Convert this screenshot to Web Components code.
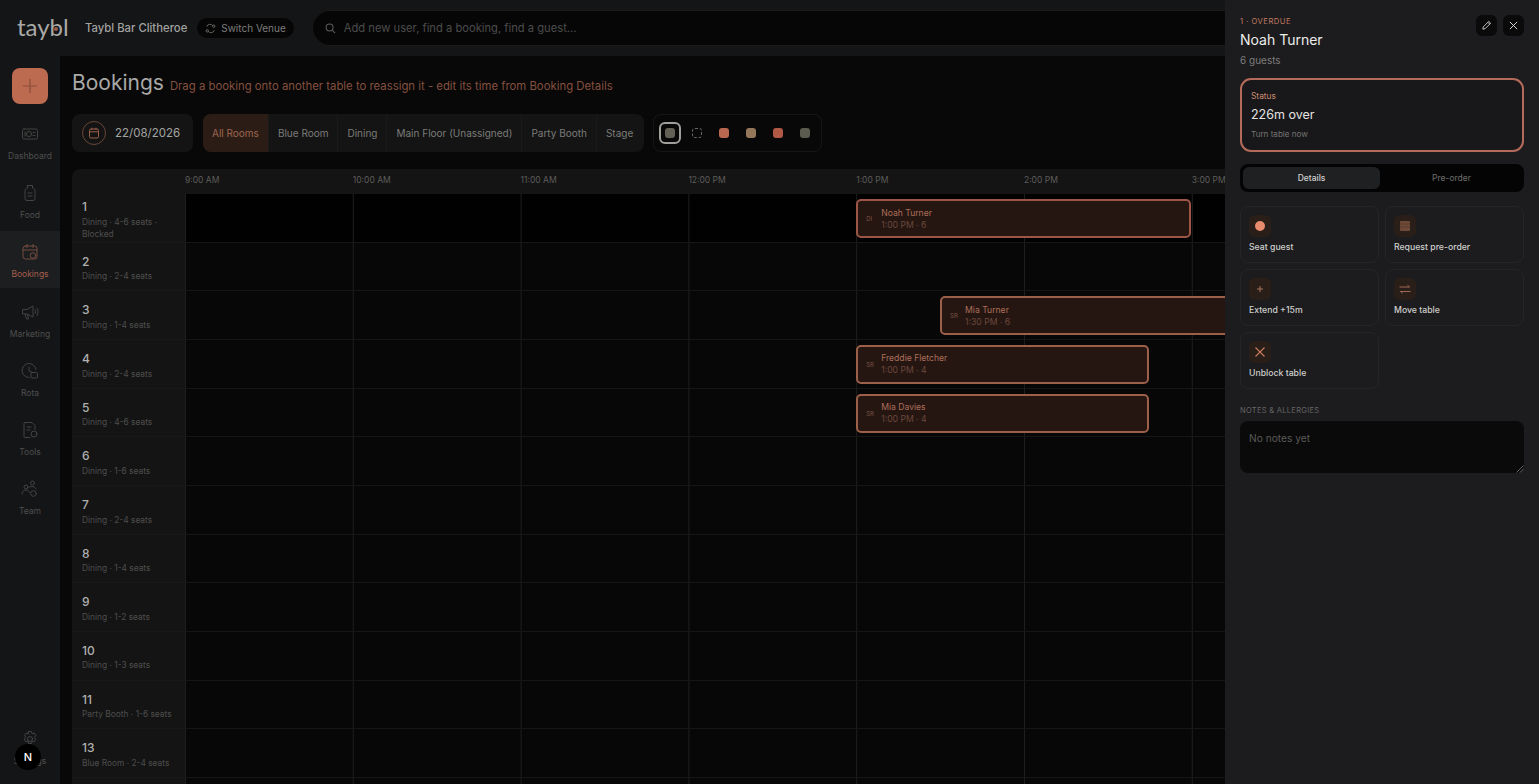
<!DOCTYPE html>
<html lang="en">
<head>
<meta charset="utf-8">
<title>Taybl Bookings</title>
<style>
html, body { margin: 0; height: 100%; background: #080808; overflow: hidden; }
body { font-family: Inter, "Noto Sans", sans-serif; color: #aaa; }
</style>
</head>
<body>
<taybl-app></taybl-app>

<script>
const ICONS = {
  dashboard: '<rect x="2.500" y="5" width="15" height="10" rx="1.500"/><circle cx="9" cy="10" r="2.600"/><path d="M13 8.500h2M13 11.500h2M5 8v4"/>',
  food: '<path d="M7.500 2.500h5v2.500c2 .6 2.500 1.600 2.500 3v7.500a2 2 0 0 1-2 2H7a2 2 0 0 1-2-2V8c0-1.400.5-2.400 2.500-3z"/><path d="M8 10h4M8 13h4"/>',
  bookings: '<rect x="3" y="4" width="14" height="13" rx="2.500"/><path d="M3 8h14M7 2.500v3M13 2.500v3"/><circle cx="13" cy="13.500" r="2.800"/>',
  marketing: '<path d="M3 7.500h4l6-3.500v11L7 12H3z"/><path d="M5 12l1.500 5h2L7.500 12.500M15 7.500c1 1.200 1 3 0 4.200M17 6c1.500 2 1.500 5.500 0 7.500"/>',
  rota: '<path d="M9 16.500a7 7 0 1 1 7-8"/><path d="M9 6v4l2.500 1"/><rect x="11" y="11.500" width="6.500" height="5.500" rx="1"/>',
  tools: '<path d="M5 2.500h7l3 3v4M5 2.500a1 1 0 0 0-1 1v13a1 1 0 0 0 1 1h5"/><path d="M7 7h4M7 10h3"/><circle cx="14" cy="14" r="3"/>',
  team: '<circle cx="6" cy="8" r="2"/><circle cx="12.500" cy="4" r="2"/><path d="M2 15c.5-3 2-4 4-4s3 .8 3.500 2.500M9.500 8c2-1 5-.8 6.500 2"/><circle cx="13.500" cy="14.500" r="2.800"/>',
  settings: '<circle cx="10" cy="10" r="2.500"/><path d="M8.500 2.500h3l.6 2.300 2.200-.7 1.500 2.600-1.600 1.700 1.600 1.700-1.500 2.600-2.200-.7-.6 2.500h-3l-.6-2.500-2.200.7-1.500-2.600 1.600-1.700L4.600 6.700l1.500-2.600 2.200.7z"/>'
};

function svgIcon(name, size) {
  return `<svg width="${size}" height="${size}" viewBox="0 0 20 20" fill="none" stroke="currentColor" stroke-width="1" stroke-linecap="round" stroke-linejoin="round">${ICONS[name]}</svg>`;
}

class TayblTopbar extends HTMLElement {
  constructor() {
    super();
    this.attachShadow({ mode: "open" });
    this.shadowRoot.innerHTML = `
<style>
:host { display: flex; align-items: center; height: 56px; background: #141516; flex: none; }
.logo { position: relative; width: 67px; padding-left: 17px; box-sizing: border-box; font: 400 24px/1 Lato, sans-serif; color: #a9a9a6; margin-top: -3px; }
.dot { position: absolute; left: 54px; top: 12px; width: 4px; height: 4px; border-radius: 50%; background: #9a5f4c; }
.venue { margin-left: 18px; font-size: 11.300px; font-weight: 500; color: #a2a2a0; }
.switch { display: flex; align-items: center; gap: 4px; height: 20px; margin-left: 10px; padding: 0 8px 0 7px; border-radius: 10px; background: #060606; font-size: 10px; color: #7d7d7b; }
.search { display: flex; align-items: center; gap: 8px; flex: 1; height: 36px; margin-left: 18px; padding-left: 13px; border-radius: 18px; background: #060606; box-shadow: inset 0 0 0 1px #1a1a1a; font-size: 11.200px; color: #4c4c4c; }
</style>
<div class="logo">taybl<span class="dot"></span></div>
<div class="venue">Taybl Bar Clitheroe</div>
<div class="switch">
  <svg width="13" height="13" viewBox="0 0 14 14" fill="none" stroke="#6b6b68" stroke-width="1"><path d="M3 5a3.500 3 0 0 1 6.500-1M11 9a3.500 3 0 0 1-6.500 1"/><circle cx="3.500" cy="9.500" r="1.300"/><circle cx="10.500" cy="4.500" r="1.300"/></svg>
  Switch Venue
</div>
<div class="search">
  <svg width="11" height="11" viewBox="0 0 12 12" fill="none" stroke="#5d5d5d" stroke-width="1.100"><circle cx="5" cy="5" r="3.800"/><path d="M8 8l3 3"/></svg>
  Add new user, find a booking, find a guest...
</div>`;
  }
}
customElements.define("taybl-topbar", TayblTopbar);

class TayblNavItem extends HTMLElement {
  constructor() {
    super();
    this.attachShadow({ mode: "open" });
  }

  connectedCallback() {
    const active = this.hasAttribute("active");
    this.shadowRoot.innerHTML = `
<style>
:host { display: flex; flex-direction: column; align-items: center; height: 59.200px; padding-top: 4px; box-sizing: border-box; font-size: 8.500px; color: ${active ? "#a35f4d" : "#4f4f4f"}; background: ${active ? "linear-gradient(#1d1e20, #1d1e20) top / 100% 57px no-repeat" : "transparent"}; }
svg { display: block; margin-top: 7px; margin-bottom: 7px; color: ${active ? "#764c40" : "#434343"}; }
</style>
${svgIcon(this.getAttribute("icon"), 20)}
<slot></slot>`;
  }
}
customElements.define("taybl-nav-item", TayblNavItem);

class TayblSidebar extends HTMLElement {
  constructor() {
    super();
    this.attachShadow({ mode: "open" });
    this.shadowRoot.innerHTML = `
<style>
:host { display: flex; flex-direction: column; width: 60px; flex: none; background: #141516; position: relative; }
.add { width: 36px; height: 36px; margin: 12px auto 9px; border-radius: 8px; background: #bc6a50; display: flex; align-items: center; justify-content: center; }
.bottom { margin-top: auto; padding-bottom: 7px; }
.dev { position: absolute; left: 15px; bottom: 14px; width: 26px; height: 26px; border-radius: 50%; background: #000; color: #fff; display: flex; align-items: center; justify-content: center; font-size: 11px; font-weight: 500; }
</style>
<div class="add"><svg width="14" height="14" viewBox="0 0 14 14" stroke="#8a4c39" stroke-width="1.200"><path d="M7 0v14M0 7h14"/></svg></div>
<slot></slot>
<div class="bottom"><taybl-nav-item icon="settings">Settings</taybl-nav-item></div>
<div class="dev">N</div>`;
  }
}
customElements.define("taybl-sidebar", TayblSidebar);

class TayblToolbar extends HTMLElement {
  constructor() {
    super();
    this.attachShadow({ mode: "open" });
    const rooms = ["All Rooms", "Blue Room", "Dining", "Main Floor (Unassigned)", "Party Booth", "Stage"];
    const tabs = rooms.map((r, i) => `<div class="tab${i === 0 ? " on" : ""}">${r}</div>`).join("");
    this.shadowRoot.innerHTML = `
<style>
:host { display: flex; align-items: stretch; height: 38px; gap: 10px; }
.date { display: flex; align-items: center; gap: 9px; width: 121px; padding-left: 10px; box-sizing: border-box; border-radius: 8px; background: #141414; font-size: 11.500px; color: #a5a5a3; }
.ring { width: 24px; height: 24px; border-radius: 50%; border: 1px solid #6a4639; box-sizing: border-box; display: flex; align-items: center; justify-content: center; }
.rooms { display: flex; border-radius: 8px; background: #141414; overflow: hidden; }
.tab { display: flex; align-items: center; padding: 0 9px; font-size: 10px; color: #7b7b79; border-left: 1px solid #1a1a1a; }
.tab:last-child { padding-right: 11px; }
.tab.on { background: #2b1d16; color: #9f6550; border-left: 0; }
.swatches { display: flex; align-items: center; gap: 17px; margin-left: -1px; width: 169px; padding-left: 12px; box-sizing: border-box; border-radius: 8px; box-shadow: inset 0 0 0 1px #161616; }
.sw { width: 10px; height: 10px; border-radius: 3px; flex: none; position: relative; }
.sw.sel::after { content: ""; position: absolute; inset: -6px; border: 2px solid #a09f9b; border-radius: 6px; }
.dash { border: 1px dashed #666; box-sizing: border-box; background: none; }
</style>
<div class="date">
  <div class="ring"><svg width="12" height="12" viewBox="0 0 12 12" fill="none" stroke="#9a5f49" stroke-width="1"><rect x="1.500" y="2" width="9" height="9" rx="1.500"/><path d="M1.500 4.800h9M4 .8v2M8 .8v2"/></svg></div>
  22/08/2026
</div>
<div class="rooms">${tabs}</div>
<div class="swatches">
  <div class="sw sel" style="background:#636155"></div>
  <div class="sw dash"></div>
  <div class="sw" style="background:#b9674f"></div>
  <div class="sw" style="background:#95775a"></div>
  <div class="sw" style="background:#b05a46"></div>
  <div class="sw" style="background:#5c5b4f"></div>
</div>`;
  }
}
customElements.define("taybl-toolbar", TayblToolbar);

class TayblBooking extends HTMLElement {
  constructor() {
    super();
    this.attachShadow({ mode: "open" });
  }

  connectedCallback() {
    const hour = 167.800;
    const start = parseFloat(this.getAttribute("start"));
    const len = parseFloat(this.getAttribute("length"));
    // offsets come from the booking time, the lane is a free canvas
    this.style.left = start * hour + "px";
    this.style.width = len * hour - 1 + "px";
    this.shadowRoot.innerHTML = `
<style>
:host { position: absolute; top: 5px; height: 39px; box-sizing: border-box; display: flex; align-items: center; border: 2px solid ${this.getAttribute("edge") || "#9c5f49"}; border-radius: 5px; background: #261612; }
.tag { width: 23px; padding-left: 8px; box-sizing: border-box; font-size: 6px; color: #7a5344; flex: none; }
.txt { font-size: 8.600px; line-height: 12px; color: #ac6f5a; }
.sub { color: #6b483c; }
</style>
<div class="tag">${this.getAttribute("tag")}</div>
<div class="txt"><slot></slot><div class="sub">${this.getAttribute("time")}</div></div>`;
  }
}
customElements.define("taybl-booking", TayblBooking);

class TayblRow extends HTMLElement {
  constructor() {
    super();
    this.attachShadow({ mode: "open" });
  }

  connectedCallback() {
    const blocked = this.hasAttribute("blocked");
    const num = this.getAttribute("num") || "";
    const info = this.getAttribute("info") || "";
    this.shadowRoot.innerHTML = `
<style>
:host { display: flex; height: 48.670px; flex: none; }
.label { width: 113px; flex: none; box-sizing: border-box; padding: 3px 8px 0 10px; display: flex; flex-direction: column; justify-content: center; background: #141414; border-bottom: 1px solid #181818; }
.num { font-size: 12px; font-weight: 500; line-height: 15px; color: #b0b0ae; }
.info { font-size: 8.400px; line-height: 12px; color: #4e4e4e; margin-top: 1.500px; }
.lane { position: relative; flex: 1; border-bottom: 1px solid #161616; background-color: ${blocked ? "#010101" : "#070707"};
  background-image: linear-gradient(90deg, #1e1e1e 1px, transparent 1px); background-size: 167.800px 100%; }
</style>
<div class="label"><div class="num">${num}</div>${info ? `<div class="info">${info}</div>` : ""}</div>
<div class="lane"><slot></slot></div>`;
  }
}
customElements.define("taybl-row", TayblRow);

class TayblTimeline extends HTMLElement {
  constructor() {
    super();
    this.attachShadow({ mode: "open" });
    const hours = ["9:00 AM", "10:00 AM", "11:00 AM", "12:00 PM", "1:00 PM", "2:00 PM", "3:00 PM", "4:00 PM"];
    this.shadowRoot.innerHTML = `
<style>
:host { display: flex; flex-direction: column; width: 1456px; border-radius: 8px 8px 0 0; overflow: hidden; }
.head { display: flex; height: 25px; flex: none; background: #141414; padding-left: 113px; }
.hour { width: 167.800px; flex: none; font-size: 8.500px; line-height: 22px; color: #5d5d5b; }
</style>
<div class="head">${hours.map(h => `<div class="hour">${h}</div>`).join("")}</div>
<slot></slot>`;
  }
}
customElements.define("taybl-timeline", TayblTimeline);

class TayblAction extends HTMLElement {
  constructor() {
    super();
    this.attachShadow({ mode: "open" });
  }

  connectedCallback() {
    const glyphs = {
      seat: '<circle cx="11" cy="11" r="5" fill="#e88a6c"/>',
      preorder: '<rect x="6" y="6" width="10" height="10" rx="1" fill="#6f4a39"/><path d="M6 9h10M6 12h10" stroke="#553829" stroke-width=".7"/>',
      extend: '<path d="M11 8v6M8 11h6" stroke="#a8745c" stroke-width="1"/>',
      move: '<path d="M5.500 9h10l-2-1.800M16.500 13.500h-10l2 1.800" fill="none" stroke="#a06a52" stroke-width="1"/>',
      unblock: '<path d="M6.500 6.500l9 9M15.500 6.500l-9 9" stroke="#c97a5e" stroke-width="1.100"/>'
    };
    this.shadowRoot.innerHTML = `
<style>
:host { display: block; height: 57px; box-sizing: border-box; padding: 8px 8px 0; border: 1px solid #242527; border-radius: 8px; font-size: 8.700px; line-height: 11px; font-weight: 500; color: #cfcfcd; }
.ico { width: 22px; height: 22px; border-radius: 6px; background: #2a1f18; margin-bottom: 4.500px; }
svg { display: block; }
</style>
<div class="ico"><svg width="22" height="22" viewBox="0 0 22 22">${glyphs[this.getAttribute("icon")]}</svg></div>
<slot></slot>`;
  }
}
customElements.define("taybl-action", TayblAction);

class TayblDrawer extends HTMLElement {
  constructor() {
    super();
    this.attachShadow({ mode: "open" });
    this.shadowRoot.innerHTML = `
<style>
:host { position: absolute; top: 0; right: 0; bottom: 0; width: 314px; box-sizing: border-box; padding: 15px; background: #1c1c1e; z-index: 5; display: flex; flex-direction: column; }
.head { position: relative; height: 63px; }
.over { font-size: 7.600px; line-height: 12px; letter-spacing: .5px; color: #c07a62; padding-top: 1px; }
.name { font-size: 14px; line-height: 20px; color: #ececea; margin-top: 2px; }
.guests { font-size: 10px; line-height: 14px; color: #7d7d7d; margin-top: 3px; }
.btns { position: absolute; top: 0; right: 0; display: flex; gap: 6px; }
.btn { width: 21px; height: 21px; border-radius: 6px; background: #0a0a0a; display: flex; align-items: center; justify-content: center; }
.status { height: 74px; box-sizing: border-box; padding: 10px 9px; border: 2px solid #b56b5b; border-radius: 11px; background: #18181a; }
.st { font-size: 8.400px; line-height: 12px; color: #c98a6f; }
.mins { font-size: 12.500px; line-height: 18px; color: #e4e4e2; margin-top: 4px; }
.turn { font-size: 8.100px; line-height: 12px; color: #747472; margin-top: 4px; }
.tabs { display: flex; height: 28px; margin-top: 12px; padding: 3px; box-sizing: border-box; border-radius: 8px; background: #040404; }
.tabs div { flex: 1; display: flex; align-items: center; justify-content: center; font-size: 8.500px; color: #6e6e6c; border-radius: 6px; padding-left: 2px; }
.tabs .on { flex: 0 0 137px; padding-left: 0; background: #1f2022; color: #d2d2d0; font-weight: 500; }
.grid { display: grid; grid-template-columns: 1fr 1fr; gap: 6px; margin-top: 14px; }
.notes-t { font-size: 7.500px; line-height: 12px; letter-spacing: .3px; color: #666; margin-top: 16px; }
.notes { position: relative; height: 52px; margin-top: 4px; box-sizing: border-box; padding: 11px 9px; border-radius: 8px; background: #0a0a0a; font-size: 10.200px; line-height: 13px; color: #5a5a58; }
.grip { position: absolute; right: 0; bottom: 0; }
</style>
<div class="head">
  <div class="over">1 · OVERDUE</div>
  <div class="name">Noah Turner</div>
  <div class="guests">6 guests</div>
  <div class="btns">
    <div class="btn"><svg width="11" height="11" viewBox="0 0 12 12" fill="none" stroke="#cfcfcd" stroke-width="1"><path d="M2 10l.5-2.500L8.500 1.500l2 2-6 6z"/><path d="M7.500 2.500l2 2"/></svg></div>
    <div class="btn"><svg width="9" height="9" viewBox="0 0 10 10" stroke="#d8d8d6" stroke-width="1.100"><path d="M1 1l8 8M9 1l-8 8"/></svg></div>
  </div>
</div>
<div class="status">
  <div class="st">Status</div>
  <div class="mins">226m over</div>
  <div class="turn">Turn table now</div>
</div>
<div class="tabs"><div class="on">Details</div><div>Pre-order</div></div>
<div class="grid"><slot></slot></div>
<div class="notes-t">NOTES &amp; ALLERGIES</div>
<div class="notes">No notes yet
  <svg class="grip" width="9" height="9" viewBox="0 0 9 9" stroke="#777" stroke-width=".8"><path d="M1.500 8.500l7-7M5 8.500l3.500-3.500"/></svg>
</div>`;
  }
}
customElements.define("taybl-drawer", TayblDrawer);

class TayblApp extends HTMLElement {
  constructor() {
    super();
    this.attachShadow({ mode: "open" });
    const rows = [
      ["1", "Dining · 4-6 seats · Blocked", "blocked", '<taybl-booking start="4" length="2" tag="DI" time="1:00 PM · 6" edge="#9c5546">Noah Turner</taybl-booking>'],
      ["2", "Dining · 2-4 seats", "", ""],
      ["3", "Dining · 1-4 seats", "", '<taybl-booking start="4.500" length="2" tag="SR" time="1:30 PM · 6">Mia Turner</taybl-booking>'],
      ["4", "Dining · 2-4 seats", "", '<taybl-booking start="4" length="1.750" tag="SR" time="1:00 PM · 4">Freddie Fletcher</taybl-booking>'],
      ["5", "Dining · 4-6 seats", "", '<taybl-booking start="4" length="1.750" tag="SR" time="1:00 PM · 4">Mia Davies</taybl-booking>'],
      ["6", "Dining · 1-6 seats", "", ""],
      ["7", "Dining · 2-4 seats", "", ""],
      ["8", "Dining · 1-4 seats", "", ""],
      ["9", "Dining · 1-2 seats", "", ""],
      ["10", "Dining · 1-3 seats", "", ""],
      ["11", "Party Booth · 1-6 seats", "", ""],
      ["13", "Blue Room · 2-4 seats", "", ""],
      ["", "", "", ""]
    ];
    this.shadowRoot.innerHTML = `
<style>
:host { display: flex; flex-direction: column; position: relative; height: 100vh; overflow: hidden; }
.body { display: flex; flex: 1; min-height: 0; }
main { flex: 1; min-width: 0; overflow: hidden; padding: 14px 12px 0; background: #080808; }
.title { display: flex; align-items: baseline; gap: 6px; height: 44px; }
h1 { margin: 0; font-size: 21px; font-weight: 400; color: #a9a9a7; line-height: 26px; }
.hint { font-size: 11.350px; color: #85503f; }
taybl-toolbar { margin-bottom: 17px; }
</style>
<taybl-topbar></taybl-topbar>
<div class="body">
  <taybl-sidebar>
    <taybl-nav-item icon="dashboard">Dashboard</taybl-nav-item>
    <taybl-nav-item icon="food">Food</taybl-nav-item>
    <taybl-nav-item icon="bookings" active>Bookings</taybl-nav-item>
    <taybl-nav-item icon="marketing">Marketing</taybl-nav-item>
    <taybl-nav-item icon="rota">Rota</taybl-nav-item>
    <taybl-nav-item icon="tools">Tools</taybl-nav-item>
    <taybl-nav-item icon="team">Team</taybl-nav-item>
  </taybl-sidebar>
  <main>
    <div class="title"><h1>Bookings</h1><div class="hint">Drag a booking onto another table to reassign it - edit its time from Booking Details</div></div>
    <taybl-toolbar></taybl-toolbar>
    <taybl-timeline>
      ${rows.map(r => `<taybl-row num="${r[0]}" info="${r[1]}" ${r[2]}>${r[3]}</taybl-row>`).join("")}
    </taybl-timeline>
  </main>
</div>
<taybl-drawer>
  <taybl-action icon="seat">Seat guest</taybl-action>
  <taybl-action icon="preorder">Request pre-order</taybl-action>
  <taybl-action icon="extend">Extend +15m</taybl-action>
  <taybl-action icon="move">Move table</taybl-action>
  <taybl-action icon="unblock">Unblock table</taybl-action>
</taybl-drawer>`;
  }
}
customElements.define("taybl-app", TayblApp);
</script>
</body>
</html>
